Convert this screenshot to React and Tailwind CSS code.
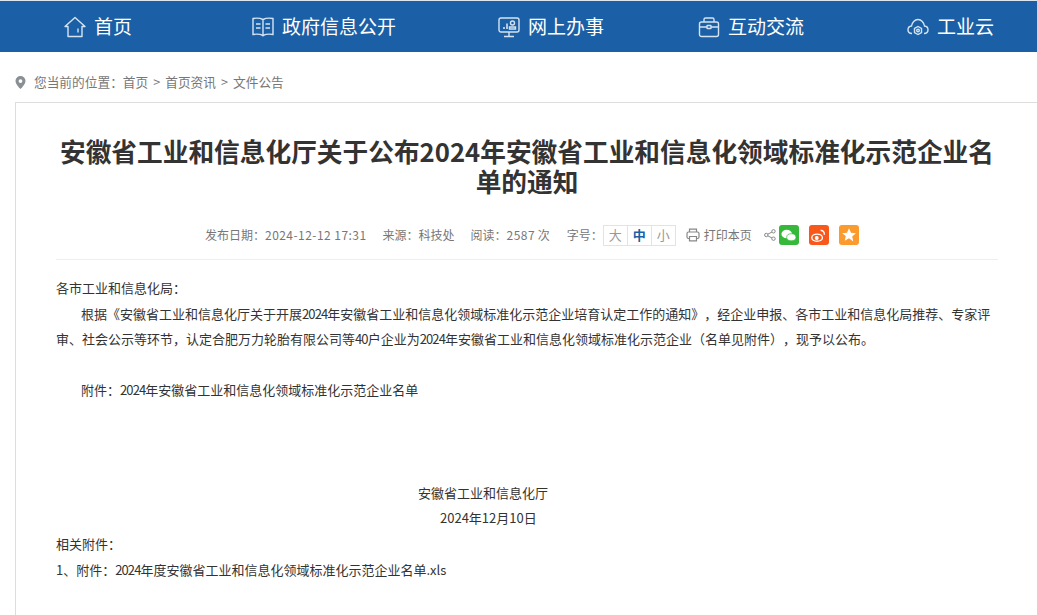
const font = "font-['Noto_Sans_CJK_SC','Noto_Sans',sans-serif]";

// full-width punctuation, written as escapes so it can't get swapped for ascii
const colon = "\uFF1A";
const comma = "\uFF0C";
const lp = "\uFF08";
const rp = "\uFF09";

const iconProps = {
  viewBox: "0 0 22 22",
  fill: "none",
  stroke: "currentColor",
  strokeWidth: 1.4,
};

const HomeIcon = ({ className }) => (
  <svg {...iconProps} className={className}>
    <path d="M1 10.500 11 1.500l10 9h-3V20.500H4V10.500z" strokeLinejoin="round" />
    <path d="M14 12.500v4" />
  </svg>
);

const BookIcon = ({ className }) => (
  <svg {...iconProps} className={className}>
    <path d="M11 3.500C9 2.500 4 2 1 2.500v16c3-.5 8 0 10 1 2-1 7-1.500 10-1v-16c-3-.5-8 0-10 1zM11 3.500v17" />
    <path d="M4 8h4.500M4 12h4.500M13.500 8H18M13.500 12H18" />
  </svg>
);

const MonitorIcon = ({ className }) => (
  <svg {...iconProps} className={className}>
    <rect x="1" y="2" width="20" height="14" rx="2" />
    <path d="M11 16v4M6 20.500h10" />
    <path d="M6 13v-2M9 13V7.500" strokeWidth="1.600" />
    <circle cx="14.500" cy="7" r="2" />
    <path d="M11.500 13v-2h6v2z" />
  </svg>
);

const CaseIcon = ({ className }) => (
  <svg {...iconProps} className={className}>
    <rect x="1.500" y="6" width="19" height="14.500" rx="2" />
    <path d="M6 6V3.500a1.500 1.500 0 0 1 1.500-1.500h7A1.500 1.500 0 0 1 16 3.500V6" />
    <path d="M1.500 11H9M13 11h7.500" />
    <rect x="9" y="9.500" width="4" height="3" rx=".5" />
  </svg>
);

const CloudIcon = ({ className }) => (
  <svg {...iconProps} className={className}>
    <path d="M5 17.500c-2.500 0-4-1.700-4-3.700 0-2 1.500-3.600 3.500-3.800C5 6.500 7.700 3.500 11 3.500s6 3 6.500 6.500c2 .2 3.500 1.800 3.500 3.800 0 2-1.500 3.700-4 3.700" />
    <path d="M11 10.500l3.500 2v4l-3.500 2-3.500-2v-4z" />
    <circle cx="11" cy="14.500" r="1.300" />
  </svg>
);

const PinIcon = ({ className }) => (
  <svg viewBox="0 0 11 13" className={className}>
    <path fillRule="evenodd" fill="#8a8f94" d="M5.500 0A5 5 0 0 0 .5 5c0 3.500 5 8 5 8s5-4.500 5-8a5 5 0 0 0-5-5zm0 3.200a1.900 1.900 0 1 1 0 3.800 1.900 1.900 0 0 1 0-3.800z" />
  </svg>
);

const PrintIcon = ({ className }) => (
  <svg viewBox="0 0 14 14" fill="none" stroke="#888" strokeWidth="1.200" className={className}>
    <path d="M3.500 4V1.200h7V4" />
    <rect x="1" y="4" width="12" height="6.500" rx="1.500" />
    <path d="M3.500 8.500h7v4.300h-7z" fill="white" />
  </svg>
);

const ShareIcon = ({ className }) => (
  <svg viewBox="0 0 12 12" fill="none" stroke="#888" strokeWidth="1" className={className}>
    <circle cx="2.300" cy="6" r="1.700" />
    <circle cx="9.500" cy="2.300" r="1.700" />
    <circle cx="9.500" cy="9.700" r="1.700" />
    <path d="M3.800 5.200 8 3M3.800 6.800 8 9" />
  </svg>
);

const navItems = [
  { label: "首页", Icon: HomeIcon, cls: "ml-[64px]" },
  { label: "政府信息公开", Icon: BookIcon, cls: "ml-[120px]" },
  { label: "网上办事", Icon: MonitorIcon, cls: "ml-[102px]" },
  { label: "互动交流", Icon: CaseIcon, cls: "ml-[94px]" },
  { label: "工业云", Icon: CloudIcon, cls: "ml-[103px]" },
];

// body digits run a little narrower in the reference
const Num = ({ children }) => <span className="tracking-[-0.9px]">{children}</span>;

export default function App() {
  return (
    <div className={`h-[615px] overflow-hidden bg-white text-[#333] [text-spacing-trim:space-all] ${font}`}>
      <nav className="flex h-[52px] items-center border-t border-[#dbe6f1] bg-[#1b60a6] text-[19px] text-white">
        {navItems.map(({ label, Icon, cls }) => (
          <a key={label} className={`flex items-center gap-[8px] ${cls}`}>
            <Icon className="h-[22px] w-[22px] text-[#d5e3f1]" />
            <span>{label}</span>
          </a>
        ))}
      </nav>

      <div className="flex h-[50px] items-center pl-[15px] pt-[10px] text-[12.7px] text-[#777]">
        <PinIcon className="mr-[8px] h-[13px] w-[11px]" />
        <span>您当前的位置{colon}</span>
        <span>首页</span>
        <span className="mx-[5px]">&gt;</span>
        <span>首页资讯</span>
        <span className="mx-[5px]">&gt;</span>
        <span>文件公告</span>
      </div>

      <main className="ml-[15px] border-l border-t border-[#ddd] pb-[60px] pl-[40px] pr-[39px]">
        <h1 className="pt-[33px] text-center text-[25.7px] font-bold leading-[30px] text-[#333]">
          安徽省工业和信息化厅关于公布2024年安徽省工业和信息化领域标准化示范企业名单的通知
        </h1>

        <div className="mt-[28px] h-[36px] border-b border-[#eee] pl-[149px] text-[12px] text-[#777]">
          <div className="flex h-[22px] items-center">
            <span>发布日期{colon}<span className="tracking-[0.45px]">2024-12-12 17:31</span></span>
            <span className="ml-[16px]">来源{colon}科技处</span>
            <span className="ml-[16px]">阅读{colon}<span className="tracking-[0.45px]">2587</span> 次</span>
            <span className="ml-[17px]">字号{colon}</span>
            <div className="flex h-[21px] border border-[#e3e3e3] text-[13px]">
              <span className="flex w-[24px] items-center justify-center border-r border-[#e3e3e3] text-[#999]">大</span>
              <span className="flex w-[24px] items-center justify-center border-r border-[#e3e3e3] font-bold text-[#1b60a6]">中</span>
              <span className="flex w-[23px] items-center justify-center text-[#999]">小</span>
            </div>
            <PrintIcon className="ml-[10px] h-[14px] w-[14px]" />
            <span className="ml-[4px]">打印本页</span>
            <ShareIcon className="ml-[12px] h-[12px] w-[12px]" />
            <span className="ml-[3px] flex h-[20px] w-[20px] items-center justify-center rounded-[3px] bg-[#36b93b]">
              <svg viewBox="0 0 24 24" className="h-[17px] w-[17px]" fill="white">
                <ellipse cx="9.500" cy="10" rx="7.500" ry="6" />
                <ellipse cx="16" cy="14.500" rx="6.500" ry="5" stroke="#36b93b" strokeWidth="1" />
              </svg>
            </span>
            <span className="ml-[10px] flex h-[20px] w-[20px] items-center justify-center rounded-[3px] bg-[#f8591a]">
              <svg viewBox="0 0 24 24" className="h-[17px] w-[17px]" fill="none" stroke="white" strokeWidth="2">
                <ellipse cx="10" cy="15" rx="7.500" ry="5" />
                <circle cx="9.500" cy="15.500" r="1.800" fill="white" />
                <path d="M15 5c3-.5 6 2 5 6" />
              </svg>
            </span>
            <span className="ml-[10px] flex h-[20px] w-[20px] items-center justify-center rounded-[3px] bg-[#fb9a2d]">
              <svg viewBox="0 0 24 24" className="h-[16px] w-[16px]" fill="white">
                <path d="M12 2l3 6.800 7.300.7-5.500 4.900 1.600 7.200L12 17l-6.400 3.600 1.600-7.200L1.700 9.500 9 8.800z" />
              </svg>
            </span>
          </div>
        </div>

        <article className="pt-[15px] text-[13px] leading-[25.6px] text-[#333]">
          <p>各市工业和信息化局{colon}</p>
          <p className="indent-[25px]">
            根据《安徽省工业和信息化厅关于开展<Num>2024</Num>年安徽省工业和信息化领域标准化示范企业培育认定工作的通知》{comma}经企业申报、各市工业和信息化局推荐、专家评审、社会公示等环节{comma}认定合肥万力轮胎有限公司等<Num>40</Num>户企业为<Num>2024</Num>年安徽省工业和信息化领域标准化示范企业{lp}名单见附件{rp}{comma}现予以公布。
          </p>
          <p className="mt-[25.6px] indent-[25px]">附件{colon}<Num>2024</Num>年安徽省工业和信息化领域标准化示范企业名单</p>
          <p className="mt-[76.8px] pl-[362px]">安徽省工业和信息化厅</p>
          <p className="pl-[384px]">2024年12月10日</p>
          <p>相关附件{colon}</p>
          <p>1、附件{colon}<Num>2024</Num>年度安徽省工业和信息化领域标准化示范企业名单.xls</p>
        </article>
      </main>
    </div>
  );
}
